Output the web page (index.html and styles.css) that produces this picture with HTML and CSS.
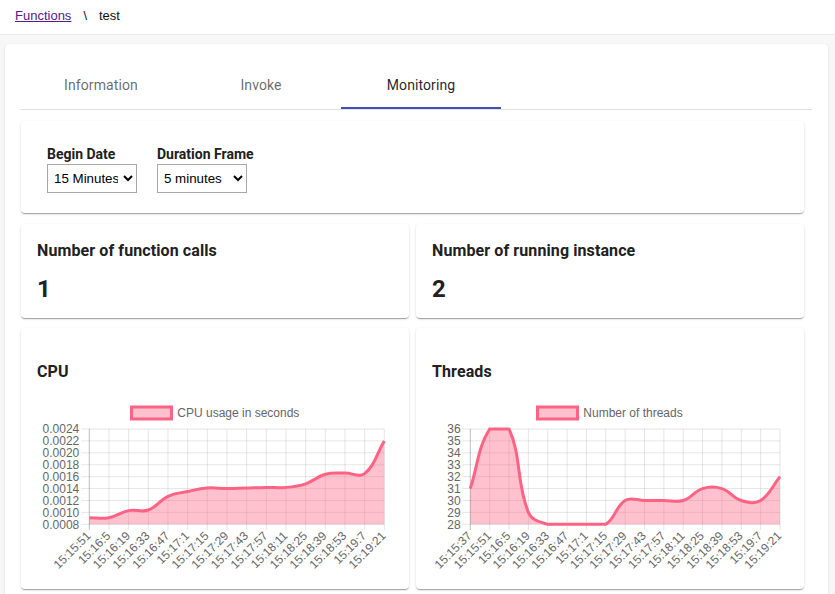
FILE: index.html
```html
<!DOCTYPE html>
<html lang="en">
<head>
<meta charset="utf-8">
<title>Functions \ test - Monitoring</title>
<link rel="stylesheet" href="styles.css">
</head>
<body>
<header class="topbar">
  <nav class="breadcrumb">
    <a class="crumb-link" href="#">Functions</a>
    <span class="crumb-sep">\</span>
    <span class="crumb-current">test</span>
  </nav>
</header>
<main class="page">
  <section class="panel">
    <div class="tabs">
      <div class="tab">Information</div>
      <div class="tab">Invoke</div>
      <div class="tab tab-active">Monitoring</div>
    </div>
    <div class="content">
      <div class="card filters">
        <div class="field">
          <label class="field-label" for="begin">Begin Date</label>
          <select class="field-select" id="begin">
            <option>5 Minutes</option>
            <option selected>15 Minutes</option>
            <option>30 Minutes</option>
            <option>1 Hour</option>
          </select>
        </div>
        <div class="field">
          <label class="field-label" for="frame">Duration Frame</label>
          <select class="field-select" id="frame">
            <option>1 minute</option>
            <option selected>5 minutes</option>
            <option>10 minutes</option>
          </select>
        </div>
      </div>
      <div class="grid">
        <div class="card stat">
          <div class="card-title">Number of function calls</div>
          <div class="stat-value">1</div>
        </div>
        <div class="card stat">
          <div class="card-title">Number of running instance</div>
          <div class="stat-value">2</div>
        </div>
        <div class="card chart-card">
          <div class="card-title chart-title">CPU</div>
          <svg class="chart-svg" viewBox="0 0 356 190" width="356" height="190">
            <rect class="legend-box" x="94.5" y="12" width="40" height="12"/>
            <text class="legend-text" x="140.3" y="21.5">CPU usage in seconds</text>
            <path class="grid-line" d="M44.3 34H347.3M44.3 45.91H347.3M44.3 57.83H347.3M44.3 69.74H347.3M44.3 81.65H347.3M44.3 93.56H347.3M44.3 105.48H347.3M44.3 117.39H347.3M44.3 129.3H52.3M71.97 34V135M91.63 34V135M111.3 34V135M130.97 34V135M150.63 34V135M170.3 34V135M189.97 34V135M209.63 34V135M229.3 34V135M248.97 34V135M268.63 34V135M288.3 34V135M307.97 34V135M327.63 34V135M347.3 34V135"/>
            <path class="area" d="M52.3,122.75 C60.17,122.75 64.35,124.14 71.97,122.75 C80.08,121.28 83.52,117.2 91.63,115.6 C99.25,114.1 104.2,117.58 111.3,115 C119.94,111.86 122.44,105.31 130.97,101.3 C138.18,97.91 142.71,98.17 150.63,96.5 C158.44,94.85 162.43,93.58 170.3,93 C178.17,92.42 182.1,93.6 189.97,93.6 C197.84,93.6 201.76,93.24 209.63,93 C217.5,92.76 221.43,92.52 229.3,92.4 C237.17,92.28 241.17,93.11 248.97,92.4 C256.9,91.67 261.11,91.3 268.63,88.8 C276.84,86.06 280.03,81.55 288.3,79.3 C295.76,77.27 300.1,78.22 307.97,78.1 C315.84,77.98 322.29,83.08 327.63,78.7 C338.02,70.2 339.43,59.02 347.3,45.9 L347.3,129.3 L52.3,129.3 Z"/>
            <path class="axis-bottom" d="M52.3 129.3H347.3"/>
            <path class="axis-left" d="M52.3 34V135"/>
            <path class="line" d="M52.3,122.75 C60.17,122.75 64.35,124.14 71.97,122.75 C80.08,121.28 83.52,117.2 91.63,115.6 C99.25,114.1 104.2,117.58 111.3,115 C119.94,111.86 122.44,105.31 130.97,101.3 C138.18,97.91 142.71,98.17 150.63,96.5 C158.44,94.85 162.43,93.58 170.3,93 C178.17,92.42 182.1,93.6 189.97,93.6 C197.84,93.6 201.76,93.24 209.63,93 C217.5,92.76 221.43,92.52 229.3,92.4 C237.17,92.28 241.17,93.11 248.97,92.4 C256.9,91.67 261.11,91.3 268.63,88.8 C276.84,86.06 280.03,81.55 288.3,79.3 C295.76,77.27 300.1,78.22 307.97,78.1 C315.84,77.98 322.29,83.08 327.63,78.7 C338.02,70.2 339.43,59.02 347.3,45.9"/>
            <text class="yl" x="42.3" y="38.2">0.0024</text>
            <text class="yl" x="42.3" y="50.1">0.0022</text>
            <text class="yl" x="42.3" y="62">0.0020</text>
            <text class="yl" x="42.3" y="73.9">0.0018</text>
            <text class="yl" x="42.3" y="85.9">0.0016</text>
            <text class="yl" x="42.3" y="97.8">0.0014</text>
            <text class="yl" x="42.3" y="109.7">0.0012</text>
            <text class="yl" x="42.3" y="121.6">0.0010</text>
            <text class="yl" x="42.3" y="133.5">0.0008</text>
            <text class="xl" transform="translate(52.3 139.3) rotate(-45)">15:15:51</text>
            <text class="xl" transform="translate(71.97 139.3) rotate(-45)">15:16:5</text>
            <text class="xl" transform="translate(91.63 139.3) rotate(-45)">15:16:19</text>
            <text class="xl" transform="translate(111.3 139.3) rotate(-45)">15:16:33</text>
            <text class="xl" transform="translate(130.97 139.3) rotate(-45)">15:16:47</text>
            <text class="xl" transform="translate(150.63 139.3) rotate(-45)">15:17:1</text>
            <text class="xl" transform="translate(170.3 139.3) rotate(-45)">15:17:15</text>
            <text class="xl" transform="translate(189.97 139.3) rotate(-45)">15:17:29</text>
            <text class="xl" transform="translate(209.63 139.3) rotate(-45)">15:17:43</text>
            <text class="xl" transform="translate(229.3 139.3) rotate(-45)">15:17:57</text>
            <text class="xl" transform="translate(248.97 139.3) rotate(-45)">15:18:11</text>
            <text class="xl" transform="translate(268.63 139.3) rotate(-45)">15:18:25</text>
            <text class="xl" transform="translate(288.3 139.3) rotate(-45)">15:18:39</text>
            <text class="xl" transform="translate(307.97 139.3) rotate(-45)">15:18:53</text>
            <text class="xl" transform="translate(327.63 139.3) rotate(-45)">15:19:7</text>
            <text class="xl" transform="translate(347.3 139.3) rotate(-45)">15:19:21</text>
          </svg>
        </div>
        <div class="card chart-card">
          <div class="card-title chart-title">Threads</div>
          <svg class="chart-svg" viewBox="0 0 356 190" width="356" height="190">
            <rect class="legend-box" x="105.5" y="12" width="40" height="12"/>
            <text class="legend-text" x="151.3" y="21.5">Number of threads</text>
            <path class="grid-line" d="M30.3 34H348M30.3 45.91H348M30.3 57.83H348M30.3 69.74H348M30.3 81.65H348M30.3 93.56H348M30.3 105.48H348M30.3 117.39H348M30.3 129.3H38.3M57.66 34V135M77.01 34V135M96.37 34V135M115.72 34V135M135.08 34V135M154.44 34V135M173.79 34V135M193.15 34V135M212.5 34V135M231.86 34V135M251.22 34V135M270.57 34V135M289.93 34V135M309.28 34V135M328.64 34V135M348 34V135"/>
            <path class="area" d="M38.3,93.56 C46.04,69.74 45.83,52.2 57.66,34 C61.31,34 74.15,34 77.01,34 C89.64,61.2 84.13,87.27 96.37,117.39 C99.62,125.39 107.36,126.73 115.72,129.3 C122.84,129.3 127.34,129.3 135.08,129.3 C142.82,129.3 146.7,129.3 154.44,129.3 C162.18,129.3 167.8,129.3 173.79,129.3 C183.29,123.46 183.65,111.32 193.15,105.48 C199.14,101.8 204.76,105.48 212.5,105.48 C220.24,105.48 224.12,105.48 231.86,105.48 C239.6,105.48 244.1,107.67 251.22,105.48 C259.58,102.91 262.21,96.13 270.57,93.56 C277.69,91.37 282.81,91.37 289.93,93.56 C298.29,96.13 300.92,102.91 309.28,105.48 C316.4,107.67 322.65,109.17 328.64,105.48 C338.14,99.63 340.26,91.18 348,81.65 L348,129.3 L38.3,129.3 Z"/>
            <path class="axis-bottom" d="M38.3 129.3H348"/>
            <path class="axis-left" d="M38.3 34V135"/>
            <path class="line" d="M38.3,93.56 C46.04,69.74 45.83,52.2 57.66,34 C61.31,34 74.15,34 77.01,34 C89.64,61.2 84.13,87.27 96.37,117.39 C99.62,125.39 107.36,126.73 115.72,129.3 C122.84,129.3 127.34,129.3 135.08,129.3 C142.82,129.3 146.7,129.3 154.44,129.3 C162.18,129.3 167.8,129.3 173.79,129.3 C183.29,123.46 183.65,111.32 193.15,105.48 C199.14,101.8 204.76,105.48 212.5,105.48 C220.24,105.48 224.12,105.48 231.86,105.48 C239.6,105.48 244.1,107.67 251.22,105.48 C259.58,102.91 262.21,96.13 270.57,93.56 C277.69,91.37 282.81,91.37 289.93,93.56 C298.29,96.13 300.92,102.91 309.28,105.48 C316.4,107.67 322.65,109.17 328.64,105.48 C338.14,99.63 340.26,91.18 348,81.65"/>
            <text class="yl" x="28.7" y="38.2">36</text>
            <text class="yl" x="28.7" y="50.1">35</text>
            <text class="yl" x="28.7" y="62">34</text>
            <text class="yl" x="28.7" y="73.9">33</text>
            <text class="yl" x="28.7" y="85.9">32</text>
            <text class="yl" x="28.7" y="97.8">31</text>
            <text class="yl" x="28.7" y="109.7">30</text>
            <text class="yl" x="28.7" y="121.6">29</text>
            <text class="yl" x="28.7" y="133.5">28</text>
            <text class="xl" transform="translate(38.3 139.3) rotate(-45)">15:15:37</text>
            <text class="xl" transform="translate(57.66 139.3) rotate(-45)">15:15:51</text>
            <text class="xl" transform="translate(77.01 139.3) rotate(-45)">15:16:5</text>
            <text class="xl" transform="translate(96.37 139.3) rotate(-45)">15:16:19</text>
            <text class="xl" transform="translate(115.72 139.3) rotate(-45)">15:16:33</text>
            <text class="xl" transform="translate(135.08 139.3) rotate(-45)">15:16:47</text>
            <text class="xl" transform="translate(154.44 139.3) rotate(-45)">15:17:1</text>
            <text class="xl" transform="translate(173.79 139.3) rotate(-45)">15:17:15</text>
            <text class="xl" transform="translate(193.15 139.3) rotate(-45)">15:17:29</text>
            <text class="xl" transform="translate(212.5 139.3) rotate(-45)">15:17:43</text>
            <text class="xl" transform="translate(231.86 139.3) rotate(-45)">15:17:57</text>
            <text class="xl" transform="translate(251.22 139.3) rotate(-45)">15:18:11</text>
            <text class="xl" transform="translate(270.57 139.3) rotate(-45)">15:18:25</text>
            <text class="xl" transform="translate(289.93 139.3) rotate(-45)">15:18:39</text>
            <text class="xl" transform="translate(309.28 139.3) rotate(-45)">15:18:53</text>
            <text class="xl" transform="translate(328.64 139.3) rotate(-45)">15:19:7</text>
            <text class="xl" transform="translate(348 139.3) rotate(-45)">15:19:21</text>
          </svg>
        </div>
      </div>
    </div>
  </section>
</main>
</body>
</html>
```
FILE: styles.css
```css
* {
  box-sizing: border-box;
}

html,
body {
  margin: 0;
  padding: 0;
  overflow: hidden;
}

body {
  width: 835px;
  height: 594px;
  background: #f7f7f7;
  font-family: Roboto, "Liberation Sans", Arial, sans-serif;
  color: rgba(0, 0, 0, 0.87);
}

/* ---------- top bar / breadcrumb ---------- */
.topbar {
  height: 35px;
  background: #fff;
  border-bottom: 1px solid #ececec;
  padding: 0 0 4px 15px;
  display: flex;
  align-items: center;
}

.breadcrumb {
  display: flex;
  align-items: center;
  font-family: "Liberation Sans", Arial, sans-serif;
  font-size: 13px;
  color: #111;
}

.crumb-link {
  color: #551a8b;
  text-decoration: underline;
}

.crumb-sep {
  margin: 0 12px;
}

/* ---------- main panel ---------- */
.page {
  padding: 9px 7px 0 5px;
}

.panel {
  background: #fff;
  border-radius: 4px;
  box-shadow: 0 1px 3px rgba(0, 0, 0, 0.1), 0 0 1px rgba(0, 0, 0, 0.08);
  padding: 17px 16px 16px;
}

.tabs {
  display: flex;
  border-bottom: 1px solid #e0e0e0;
}

.tab {
  width: 160px;
  height: 48px;
  padding-top: 2px;
  display: flex;
  align-items: center;
  justify-content: center;
  font-size: 14px;
  letter-spacing: 0.1px;
  color: rgba(0, 0, 0, 0.6);
  border-bottom: 2px solid transparent;
}

.tab-active {
  color: rgba(0, 0, 0, 0.87);
  border-bottom-color: #3f51b5;
}

.content {
  padding: 11px 8px 0 0;
}

/* ---------- cards ---------- */
.card {
  background: #fff;
  border-radius: 4px;
  box-shadow: 0 2px 1px -1px rgba(0, 0, 0, 0.2), 0 1px 1px 0 rgba(0, 0, 0, 0.14), 0 1px 3px 0 rgba(0, 0, 0, 0.12);
}

.filters {
  display: flex;
  gap: 20px;
  padding: 25px 26px 20px;
}

.field {
  display: flex;
  flex-direction: column;
}

.field-label {
  font-size: 14px;
  font-weight: 700;
  line-height: 17px;
  margin-bottom: 1px;
  color: #212121;
}

.field-select {
  width: 90px;
  height: 29px;
  border: 1px solid #a9a9a9;
  border-radius: 0;
  background: #fff;
  font-family: "Liberation Sans", Arial, sans-serif;
  font-size: 13.33px;
  color: #000;
  padding: 0 2px;
}

.grid {
  display: grid;
  grid-template-columns: 1fr 1fr;
  column-gap: 7px;
  row-gap: 10px;
  margin-top: 11px;
}

.stat {
  padding: 17px 16px 15px;
}

.card-title {
  font-size: 16px;
  font-weight: 700;
  line-height: 19px;
  letter-spacing: 0.1px;
  color: #212121;
}

.stat-value {
  margin-top: 15px;
  font-size: 24px;
  font-weight: 700;
  line-height: 28px;
  color: #212121;
}

.chart-card {
  padding: 16px 16px 4px;
}

.chart-title {
  margin-top: 18px;
}

.chart-svg {
  display: block;
  margin-top: 14px;
  font-family: "Liberation Sans", Arial, sans-serif;
}

/* ---------- chart parts ---------- */
.grid-line {
  fill: none;
  stroke: rgba(0, 0, 0, 0.1);
  stroke-width: 1;
}

.axis-left {
  fill: none;
  stroke: rgba(0, 0, 0, 0.25);
  stroke-width: 1;
}

.axis-bottom {
  fill: none;
  stroke: rgba(0, 0, 0, 0.12);
  stroke-width: 1;
}

.area {
  fill: rgba(255, 99, 132, 0.4);
  stroke: none;
}

.line {
  fill: none;
  stroke: #ff6384;
  stroke-width: 3;
  stroke-linejoin: round;
}

.legend-box {
  fill: rgba(255, 99, 132, 0.4);
  stroke: #ff6384;
  stroke-width: 3;
}

.legend-text,
.yl,
.xl {
  font-size: 12px;
  fill: #666;
}

.yl {
  text-anchor: end;
}

.xl {
  text-anchor: end;
  dominant-baseline: middle;
}
```
